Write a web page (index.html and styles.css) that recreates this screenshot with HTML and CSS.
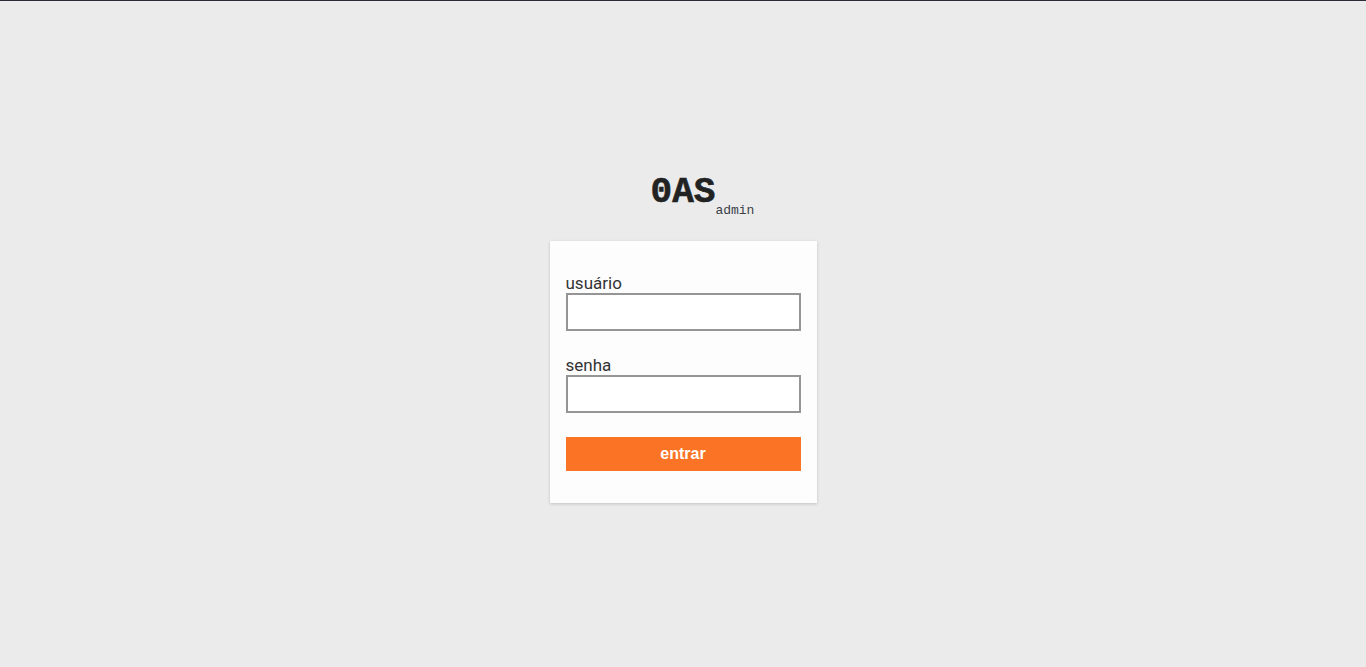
FILE: index.html
```html
<!DOCTYPE html>
<html lang="pt">
<head>
<meta charset="utf-8">
<title>0AS admin</title>
<link rel="stylesheet" href="styles.css">
</head>
<body>
<main class="page">
  <h1 class="brand"><span class="brand-name">0AS<span class="brand-sub">admin</span></span></h1>
  <form class="card">
    <div class="field">
      <label class="label" for="u">usuário</label>
      <input class="input" id="u" type="text">
    </div>
    <div class="field">
      <label class="label" for="p">senha</label>
      <input class="input" id="p" type="password">
    </div>
    <button class="btn" type="button">entrar</button>
  </form>
</main>
</body>
</html>
```
FILE: styles.css
```css
html, body {
  margin: 0;
  padding: 0;
  height: 100%;
}
body {
  background: #ebebeb;
  border-top: 1px solid #2b2b3a;
  box-sizing: border-box;
  font-family: Roboto, "Liberation Sans", sans-serif;
}
.page {
  min-height: 666px;
  display: flex;
  flex-direction: column;
  align-items: center;
  justify-content: center;
  padding-top: 7px;
  box-sizing: border-box;
}
.brand {
  margin: 0 0 27px;
  font-family: "Liberation Mono", "DejaVu Sans Mono", monospace;
  font-weight: bold;
  font-size: 36px;
  line-height: 42px;
  color: #222;
}
.brand-name {
  position: relative;
  -webkit-text-stroke: 0.6px #222;
}
.brand-sub {
  position: absolute;
  left: 100%;
  bottom: -5px;
  font-size: 13px;
  font-weight: normal;
  line-height: 15px;
  color: #3a3f48;
  -webkit-text-stroke: 0;
}
.card {
  width: 267px;
  box-sizing: border-box;
  background: #fdfdfd;
  padding: 33px 16px 32px;
  box-shadow: 0 1px 3px rgba(0,0,0,0.18);
  display: flex;
  flex-direction: column;
}
.field {
  display: flex;
  flex-direction: column;
  margin-bottom: 25px;
}
.label {
  font-size: 17px;
  line-height: 19px;
  color: #333;
}
.input {
  height: 38px;
  box-sizing: border-box;
  border: 2px solid #959595;
  background: #fff;
  margin: 0;
  padding: 0 8px;
  outline: none;
}
.field + .btn {
  margin-top: -1px;
}
.btn {
  height: 34px;
  border: none;
  background: #fb7324;
  color: #fff;
  font-family: "Liberation Sans", Arial, sans-serif;
  font-weight: bold;
  font-size: 16px;
  cursor: pointer;
}
```
